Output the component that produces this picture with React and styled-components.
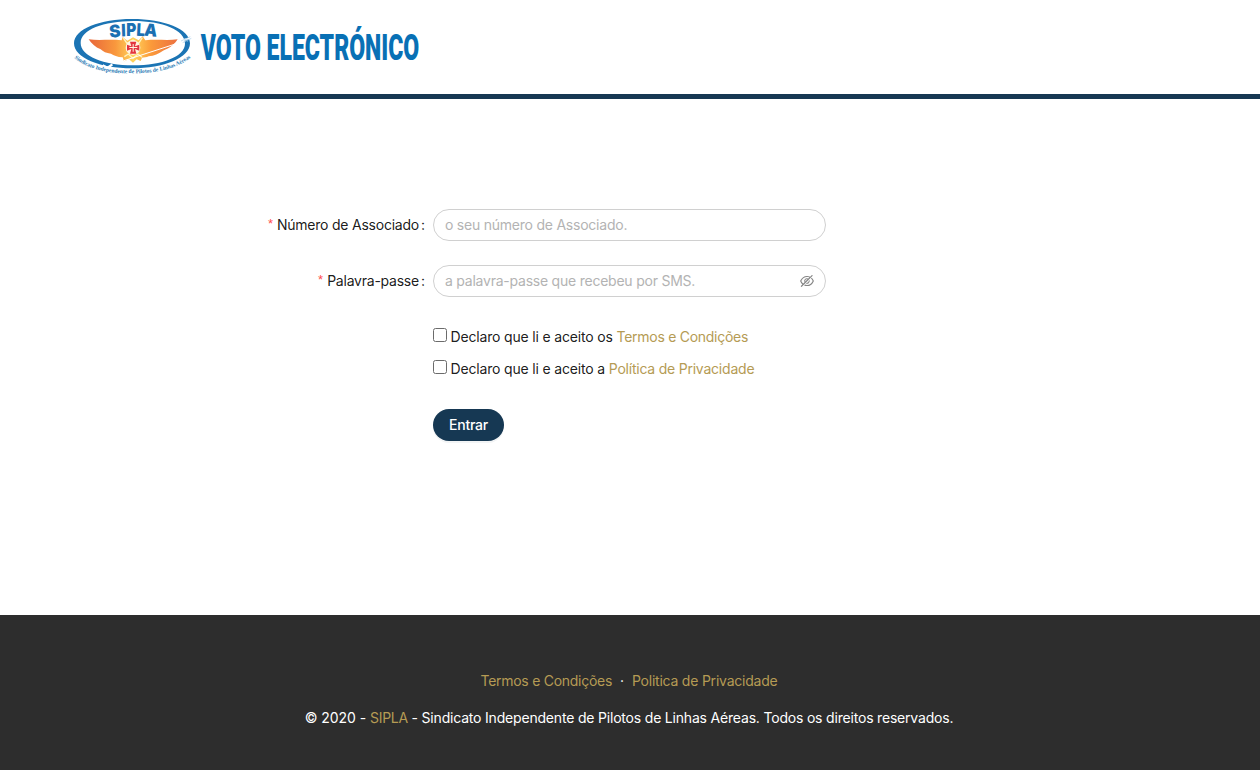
import React from "react";
import styled, { createGlobalStyle } from "styled-components";
import { AiOutlineEyeInvisible } from "react-icons/ai";

const GlobalStyle = createGlobalStyle`
  *, *::before, *::after { box-sizing: border-box; }
  html, body { margin: 0; padding: 0; }
  body {
    background: #fff;
    color: rgba(0, 0, 0, 0.9);
    font-family: Inter, "Liberation Sans", sans-serif;
    font-size: 14px;
    line-height: 22px;
    letter-spacing: -0.23px;
  }
`;

const Page = styled.div`
  display: flex;
  flex-direction: column;
  height: 770px;
`;

const Header = styled.header`
  display: flex;
  height: 99px;
  padding: 8px 64px 0;
  border-bottom: 5px solid #163853;
`;

const LogoArt = styled.svg`
  display: block;
  flex: none;
  width: 366px;
  height: 75px;
  overflow: visible;
  letter-spacing: 0;
`;

const Main = styled.main`
  flex: 1;
  padding: 110px 0 0;
`;

const Form = styled.form`
  display: flex;
  flex-direction: column;
  gap: 24px;
  width: 826px;
`;

const Row = styled.div`
  display: grid;
  grid-template-columns: 433px 393px;
`;

const Label = styled.label`
  display: flex;
  justify-content: flex-end;
  align-items: center;
  height: 32px;
  padding-right: 8px;

  &::before {
    content: "*";
    margin: -2px 4px 0 0;
    color: #ff4d4f;
    font-size: 13px;
    font-family: "Liberation Sans", sans-serif;
    line-height: 14px;
    letter-spacing: 0;
  }
  &::after {
    content: ":";
    margin-left: 2px;
    letter-spacing: 0;
  }
`;

const Field = styled.div`
  display: flex;
  align-items: center;
  height: 32px;
  padding: 0 10px 0 11px;
  border: 1px solid #d0d0d0;
  border-radius: 16px;
  background: #fff;
  color: #858585;
`;

const Input = styled.input`
  flex: 1;
  min-width: 0;
  padding: 0;
  border: 0;
  outline: 0;
  background: transparent;
  font: inherit;
  letter-spacing: inherit;

  &::placeholder { color: #b3b3b3; opacity: 1; }
`;

const Agreements = styled.div`
  grid-column: 2;
`;

const Agreement = styled.label`
  display: flex;
  align-items: center;
  height: 32px;
  letter-spacing: -0.17px;
`;

const Checkbox = styled.input`
  appearance: none;
  width: 14px;
  height: 14px;
  margin: -4px 3.5px 0 0;
  border: 1px solid #6b6b6b;
  border-radius: 2.5px;
  background: #fff;
`;

const Link = styled.a`
  color: #b59b54;
  letter-spacing: ${(p) => p.$spacing || "-0.22px"};
  text-decoration: none;
`;

const Submit = styled.button`
  grid-column: 2;
  justify-self: start;
  width: 71px;
  height: 32px;
  padding: 0;
  border: 0;
  border-radius: 16px;
  background: #163853;
  box-shadow: 0 2px 0 rgba(5, 35, 60, 0.05);
  color: #fff;
  font: inherit;
  font-weight: 500;
  letter-spacing: -0.2px;
`;

const Footer = styled.footer`
  display: flex;
  flex-direction: column;
  align-items: center;
  gap: 15px;
  height: 155px;
  padding: 55px 2px 0 0;
  background: #2d2d2d;
  color: #fff;
`;

const FooterLinks = styled.nav`
  display: flex;
  gap: 8px;
`;

const Copyright = styled.p`
  margin: 0;
  letter-spacing: -0.19px;
`;

const Year = styled.span`
  letter-spacing: -0.05px;
`;

const badgeLetters = [
  { glyph: "S", x: 136, y: 88, width: 34, turn: -5 },
  { glyph: "I", x: 172, y: 85, width: 13, turn: -2 },
  { glyph: "P", x: 187, y: 84, width: 30, turn: 0 },
  { glyph: "L", x: 218, y: 84, width: 25, turn: 3 },
  { glyph: "A", x: 241, y: 85, width: 39, turn: 6 },
];

function Logo() {
  return (
    <LogoArt viewBox="0 0 1098 225" role="img" aria-label="SIPLA Voto Electrónico">
      <defs>
        <linearGradient id="wing" x1="0" x2="1">
          <stop offset="0" stopColor="#e8663a" />
          <stop offset="0.3" stopColor="#f9983d" />
          <stop offset="0.5" stopColor="#ffd45c" />
          <stop offset="0.7" stopColor="#fb9a3a" />
          <stop offset="1" stopColor="#ec7040" />
        </linearGradient>
        <path id="motto" d="M31 150 C75 186 135 197 207 196 C280 195 340 182 384 146" />
      </defs>
      <path
        fill="#1b74b4"
        fillRule="evenodd"
        d="M204 33 C300 33 378 63 378 106 C378 150 300 181 204 181 C108 181 30 150 30 106 C30 63 108 33 204 33Z M208 39 C118 40 50 65 50 105 C50 144 118 172 208 172 C294 172 363 145 363 107 C363 66 296 39 208 39Z"
      />
      <path d="M116 172 L130 180 L145 169" stroke="#fff" strokeWidth="7" fill="none" />
      <path
        fill="url(#wing)"
        d="M74 94 C105 98 140 93 173 97 L176 87 L190 98 L207 88 L224 97 L236 85 L244 97 C275 93 310 98 341 94 C332 109 318 120 297 128 C285 137 270 143 254 145 C247 148 240 149 234 149 L230 159 L218 154 L207 164 L195 154 L180 160 L176 148 C160 147 149 142 141 137 C127 136 117 131 110 124 C94 118 82 107 74 94Z"
      />
      <path d="M178 90 L189 106 L207 96 L224 106 L235 89 M181 146 L193 138 L207 151 L222 138 L234 148" fill="none" stroke="#fff3bf" strokeWidth="4" />
      <circle cx="207" cy="119" r="22" fill="#fff4e0" />
      <path
        fill="#e3343f"
        fillRule="evenodd"
        d="M198 101 H217 L213 115 L226 110 V128 L213 123 L217 137 H198 L202 123 L189 128 V110 L202 115Z M206 108 V117 H196 V120 H206 V131 H209 V120 H220 V117 H209 V108Z"
      />
      <path d="M180 158 L365 98" stroke="#fff" strokeWidth="3" />
      <path d="M355 96 L377 91" stroke="#fff" strokeWidth="5" />
      <path d="M351 99 L379 86 M356 104 L382 91 M364 92 L371 101" stroke="#a7cfea" strokeWidth="2" />
      {badgeLetters.map((l) => (
        <text
          key={l.glyph}
          x={l.x}
          y={l.y}
          transform={`rotate(${l.turn} ${l.x + l.width / 2} ${l.y - 18})`}
          fill="#1b70b2"
          fontFamily="Inter, sans-serif"
          fontWeight="900"
          fontSize="52"
          textLength={l.width}
          lengthAdjust="spacingAndGlyphs"
        >
          {l.glyph}
        </text>
      ))}
      <text fill="#2679b4" fontFamily="Liberation Serif, serif" fontWeight="700" fontSize="17">
        <textPath href="#motto" textLength="368" lengthAdjust="spacingAndGlyphs">
          Sindicato Independente de Pilotos de Linhas Aéreas
        </textPath>
      </text>
      <text
        x="745"
        y="157"
        transform="translate(410 0) scale(0.6 1) translate(-745 0)"
        fill="#0870b5"
        fontFamily="Roboto, sans-serif"
        fontWeight="900"
        fontSize="113"
        textLength="1093"
        lengthAdjust="spacingAndGlyphs"
      >
        VOTO ELECTRÓNICO
      </text>
    </LogoArt>
  );
}

export default function App() {
  return (
    <Page>
      <GlobalStyle />
      <Header>
        <Logo />
      </Header>
      <Main>
        <Form>
          <Row>
            <Label htmlFor="member">Número de Associado</Label>
            <Field>
              <Input id="member" placeholder="o seu número de Associado." />
            </Field>
          </Row>
          <Row>
            <Label htmlFor="password">Palavra-passe</Label>
            <Field>
              <Input id="password" type="password" placeholder="a palavra-passe que recebeu por SMS." />
              <AiOutlineEyeInvisible size={16} />
            </Field>
          </Row>
          <Row>
            <Agreements>
              <Agreement>
                <Checkbox type="checkbox" />
                <span>Declaro que li e aceito os <Link $spacing="-0.27px">Termos e Condições</Link></span>
              </Agreement>
              <Agreement>
                <Checkbox type="checkbox" />
                <span>Declaro que li e aceito a <Link>Política de Privacidade</Link></span>
              </Agreement>
            </Agreements>
          </Row>
          <Row>
            <Submit type="button">Entrar</Submit>
          </Row>
        </Form>
      </Main>
      <Footer>
        <FooterLinks>
          <Link $spacing="-0.27px">Termos e Condições</Link>
          <span>·</span>
          <Link>Politica de Privacidade</Link>
        </FooterLinks>
        <Copyright>
          <Year>© 2020 - </Year>
          <Link $spacing="-0.3px">SIPLA</Link> - Sindicato Independente de Pilotos de Linhas Aéreas. Todos os direitos reservados.
        </Copyright>
      </Footer>
    </Page>
  );
}
